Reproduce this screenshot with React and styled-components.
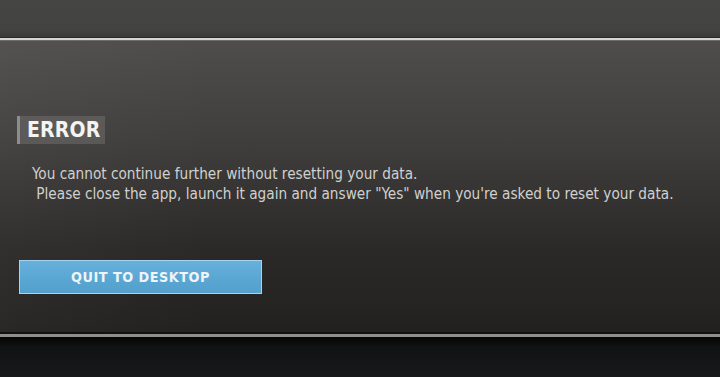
import React from "react";
import styled, { createGlobalStyle } from "styled-components";

const Global = createGlobalStyle`
  html, body { margin: 0; padding: 0; background: #161718; }
  body { width: 720px; height: 377px; overflow: hidden; }
`;

const Screen = styled.div`
  width: 720px;
  height: 377px;
  display: flex;
  flex-direction: column;
  background: #161718;
  font-family: "DejaVu Sans Condensed", "DejaVu Sans", sans-serif;
`;

const TopBand = styled.div`
  height: 37px;
  flex: none;
  background: linear-gradient(180deg, #454643 0%, #434441 80%, #3a3b38 100%);
`;

const Rule = styled.div`
  flex: none;
  height: ${(p) => p.$h}px;
  background: ${(p) => p.$bg};
`;

const Panel = styled.div`
  flex: none;
  height: 291px;
  box-sizing: border-box;
  padding: 75px 0 0 17px;
  display: flex;
  flex-direction: column;
  align-items: flex-start;
  background:
    linear-gradient(90deg, rgba(255,255,255,0.03) 0%, rgba(255,255,255,0) 30%),
    linear-gradient(180deg, #4f4d4b 0%, #403e3c 35%, #2c2a29 70%, #232120 100%);
`;

const Label = styled.div`
  display: flex;
  align-items: center;
  height: 28px;
  box-sizing: border-box;
  padding: 0 4px 0 7px;
  border-left: 3px solid #8d8d8b;
  background: rgba(110, 110, 108, 0.55);
  color: #f4f4f2;
  font-weight: bold;
  font-size: 21px;
  letter-spacing: 0.2px;
`;

const Message = styled.div`
  margin: 20px 0 0 15px;
  color: #d0d0ce;
  font-size: 15.2px;
  line-height: 20px;
  white-space: pre;
`;

const QuitButton = styled.button`
  margin: 56px 0 0 2px;
  width: 243px;
  height: 34px;
  box-sizing: border-box;
  border: 1px solid #a6d3ee;
  background: linear-gradient(180deg, #66b1dc 0%, #59a6d3 60%, #54a0cd 100%);
  color: #eef4f8;
  font-family: "DejaVu Sans Condensed", "DejaVu Sans", sans-serif;
  font-weight: bold;
  font-size: 14.3px;
  letter-spacing: 0.5px;
  padding: 0;
  cursor: pointer;
`;

const Floor = styled.div`
  flex: 1;
  background: linear-gradient(180deg, #050505 0%, #111213 25%, #18191a 100%);
`;

export default function App() {
  return (
    <>
      <Global />
      <Screen>
        <TopBand />
        <Rule $h={1} $bg="#2a2a28" />
        <Rule $h={2} $bg="#d4d4d2" />
        <Rule $h={1} $bg="#6c6c6a" />
        <Panel>
          <Label>ERROR</Label>
          <Message>
            {"You cannot continue further without resetting your data.\n Please close the app, launch it again and answer \"Yes\" when you're asked to reset your data."}
          </Message>
          <QuitButton>QUIT TO DESKTOP</QuitButton>
        </Panel>
        <Rule $h={2} $bg="#121110" />
        <Rule $h={3} $bg="#8e8e8c" />
        <Floor />
      </Screen>
    </>
  );
}
